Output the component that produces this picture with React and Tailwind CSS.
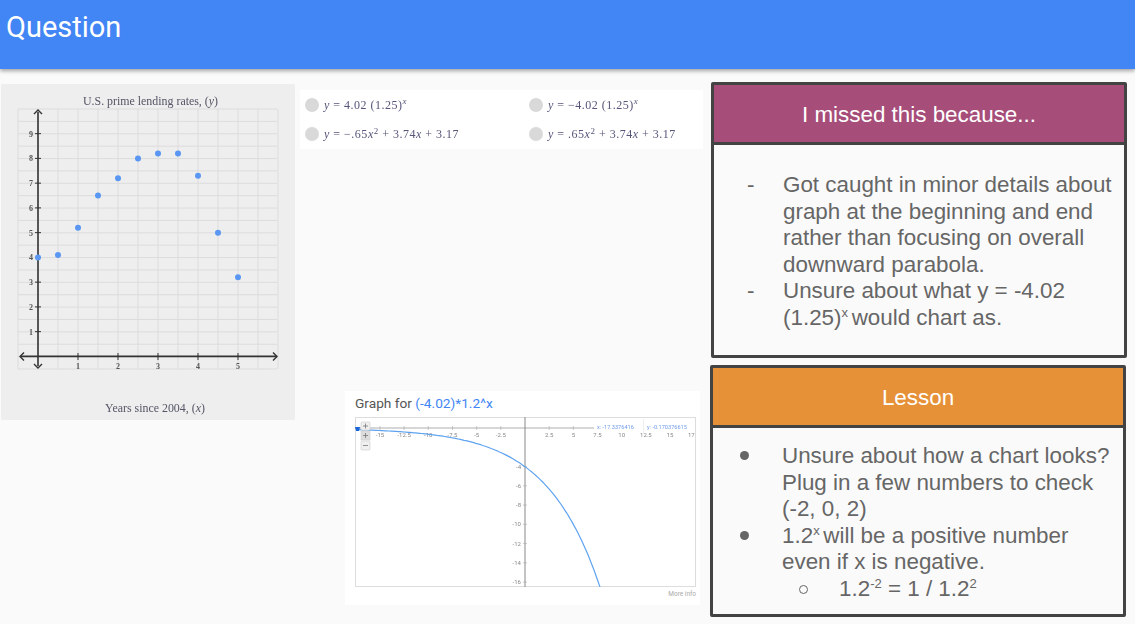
import React from 'react';

const Sans = '[font-family:"Liberation_Sans",Arial,sans-serif]';

// --- DRAWINGS ---
const LendingChart = () => {
  const points = [[0, 4], [0.5, 4.1], [1, 5.2], [1.5, 6.5], [2, 7.2], [2.5, 8], [3, 8.2], [3.5, 8.2], [4, 7.3], [4.5, 5], [5, 3.2]];
  const px = (x) => 38 + x * 40;
  const py = (y) => 356.4 - y * 24.75;
  const vLines = Array.from({ length: 14 }, (_, i) => 18 + i * 20);
  const hLines = Array.from({ length: 22 }, (_, i) => 369 - i * 12.38);
  const serif = { fontFamily: '"Liberation Serif", serif' };

  return (
    <svg viewBox="1 84 294 336" className="w-full h-full blur-[0.4px]">
      <rect x="1" y="84" width="294" height="336" fill="#eeeeee" />
      {vLines.map((x) => <line key={x} x1={x} x2={x} y1="109" y2="369" stroke="#dcdcdc" strokeWidth="1" />)}
      {hLines.map((y) => <line key={y} x1="18" x2="277" y1={y} y2={y} stroke="#dcdcdc" strokeWidth="1" />)}
      <line x1="38" x2="38" y1="112" y2="366" stroke="#333" strokeWidth="1.6" />
      <line x1="21" x2="277" y1="356.4" y2="356.4" stroke="#333" strokeWidth="1.6" />
      <path d="M34 114l4-4 4 4M34 364l4 4 4-4M24 352.4l-4 4 4 4M273 352.4l4 4-4 4" fill="none" stroke="#333" strokeWidth="1.4" />
      {[1, 2, 3, 4, 5, 6, 7, 8, 9].map((n) => (
        <g key={n}>
          <line x1="35" x2="41" y1={py(n)} y2={py(n)} stroke="#333" />
          <text x="31" y={py(n) + 3} fontSize="8" fontWeight="bold" textAnchor="middle" fill="#555" style={serif}>{n}</text>
        </g>
      ))}
      {[1, 2, 3, 4, 5].map((n) => (
        <g key={n}>
          <line x1={px(n)} x2={px(n)} y1="353" y2="360" stroke="#333" />
          <text x={px(n)} y="369" fontSize="8" fontWeight="bold" textAnchor="middle" fill="#555" style={serif}>{n}</text>
        </g>
      ))}
      {points.map(([x, y]) => <circle key={x} cx={px(x)} cy={py(y)} r="3" fill="#5a97f2" />)}
      <text x="150.5" y="105" fontSize="11.9" textAnchor="middle" fill="#555566" style={serif}>U.S. prime lending rates, (<tspan fontStyle="italic">y</tspan>)</text>
      <text x="155" y="412" fontSize="11.9" textAnchor="middle" fill="#555566" style={serif}>Years since 2004, (<tspan fontStyle="italic">x</tspan>)</text>
    </svg>
  );
};

const FunctionGraph = () => {
  const px = (x) => 525 + x * 9.67;
  const py = (y) => 428 - y * 9.63;
  const curve = [];
  for (let x = -17.3; x <= 8; x += 0.2) {
    curve.push(`${px(x).toFixed(1)},${py(-4.02 * Math.pow(1.2, x)).toFixed(1)}`);
  }
  const xLabels = [-15, -12.5, -10, -7.5, -5, -2.5, 2.5, 5, 7.5, 10, 12.5, 15, 17];
  const yLabels = [-4, -6, -8, -10, -12, -14, -16];
  const font = { fontFamily: 'Roboto, sans-serif' };

  return (
    <svg viewBox="355 417 341 170" className="w-full h-full blur-[0.3px]">
      <rect x="355.5" y="417.5" width="340" height="169" fill="#fff" stroke="#dddddd" />
      <line x1="355" x2="594" y1="428" y2="428" stroke="#999" strokeWidth="0.8" />
      <line x1="525" x2="525" y1="417" y2="587" stroke="#888" strokeWidth="1" />
      {xLabels.map((n) => (
        <g key={n}>
          <text x={px(n === 17 ? 17.2 : n)} y="437" fontSize="6" textAnchor="middle" fill="#888" style={font}>{n}</text>
          <line x1={px(n)} x2={px(n)} y1="426" y2="430" stroke="#aaa" strokeWidth="0.6" />
        </g>
      ))}
      {yLabels.map((n) => (
        <g key={n}>
          <text x="521" y={py(n) + 2} fontSize="6" textAnchor="end" fill="#888" style={font}>{n}</text>
          <line x1="523" x2="527" y1={py(n)} y2={py(n)} stroke="#aaa" strokeWidth="0.6" />
        </g>
      ))}
      <polyline points={curve.join(' ')} fill="none" stroke="#5fa3f0" strokeWidth="1.2" />
      <rect x="594" y="419" width="101" height="14" fill="#fff" />
      <line x1="643.5" x2="643.5" y1="419" y2="433" stroke="#eee" />
      <text x="597" y="429" fontSize="5.6" fill="#6f9bea" style={font}>x: -17.3376416</text>
      <text x="647" y="429" fontSize="5.6" fill="#6f9bea" style={font}>y: -0.170376615</text>
      <path d="M355 427h5l-1 4h-3z" fill="#1a66d8" />
      <rect x="361" y="422" width="9" height="8" rx="1" fill="#f0f0f0" stroke="#ccc" strokeWidth="0.6" />
      <rect x="361" y="431" width="9" height="9" fill="#ddd" stroke="#ccc" strokeWidth="0.6" />
      <rect x="361" y="441" width="9" height="9" rx="1" fill="#f0f0f0" stroke="#ccc" strokeWidth="0.6" />
      <path d="M363 426h5M365.5 423.5v5M363 435.5h5M365.5 433v5M363 445.5h5" stroke="#777" strokeWidth="0.8" />
    </svg>
  );
};

// --- LAYOUT COMPONENTS ---
const Formula = ({ children }) => (
  <div className="flex items-center h-[29px]">
    <span className="w-[14px] h-[14px] rounded-full bg-[#d9d9d9] shrink-0"></span>
    <span className='ml-[5px] text-[12px] tracking-[0.5px] text-[#55557a] blur-[0.3px] [font-family:"Liberation_Serif",serif]'>{children}</span>
  </div>
);

const V = ({ children }) => <i>{children}</i>;

const Card = ({ title, color, headerH, bodyClass, children, className }) => (
  <section className={`border-[3px] border-[#434343] rounded-[2px] bg-[#fafafa] flex flex-col ${className}`}>
    <h2 className={`${color} ${headerH} border-b-[3px] border-[#434343] pt-[3px] flex items-center justify-center text-white text-[22.4px] ${Sans}`}>{title}</h2>
    <div className={`flex-1 text-[#666666] text-[22.4px] leading-[26.5px] ${Sans} ${bodyClass}`}>{children}</div>
  </section>
);

const Item = ({ marker, indent = 'pl-[33px]', width = 'w-[36px]', children }) => (
  <div className={`flex ${indent}`}>
    <span className={`${width} shrink-0`}>{marker}</span>
    <span>{children}</span>
  </div>
);

const Sup = ({ children }) => <sup className="text-[13px] -top-[8px]">{children}</sup>;

const Dot = () => <span className="block w-[9px] h-[9px] rounded-full bg-[#666] ml-[-6px] mt-[8px]"></span>;

export default function App() {
  return (
    <div className="h-screen w-full overflow-hidden bg-[#fafafa] flex flex-col">
      <header className='h-[69px] shrink-0 bg-[#4285f4] shadow-[0_2px_4px_rgba(0,0,0,0.35)] pl-[6px] pt-[9px] text-white text-[29px] leading-[36px] [font-family:Roboto,sans-serif]'>
        Question
      </header>
      <main className="flex-1 flex items-start pl-px">
        <div className="w-[294px] h-[336px] mt-[15px] shrink-0">
          <LendingChart />
        </div>
        <div className="w-[403px] ml-[5px] shrink-0">
          <div className="mt-[21px] h-[59px] bg-white grid grid-cols-2 pl-[5px]">
            <Formula><V>y</V> = 4.02 (1.25)<sup><V>x</V></sup></Formula>
            <div className="pl-[25px]"><Formula><V>y</V> = −4.02 (1.25)<sup><V>x</V></sup></Formula></div>
            <Formula><V>y</V> = −.65<V>x</V><sup>2</sup> + 3.74<V>x</V> + 3.17</Formula>
            <div className="pl-[25px]"><Formula><V>y</V> = .65<V>x</V><sup>2</sup> + 3.74<V>x</V> + 3.17</Formula></div>
          </div>
          <div className="mt-[242px] ml-[45px] w-[355px] h-[214px] bg-white pl-[10px] pr-[4px]">
            <div className="h-[26px] pt-[2px] text-[13.7px] leading-[20px] text-[#555] [font-family:Roboto,sans-serif]">
              Graph for <span className="text-[#4285f4]">(-4.02)*1.2^x</span>
            </div>
            <div className="h-[170px]">
              <FunctionGraph />
            </div>
            <div className="text-right text-[6.5px] leading-[14px] text-[#aaa] [font-family:Roboto,sans-serif]">More info</div>
          </div>
        </div>
        <div className="w-[416px] ml-[8px] mt-[13px] shrink-0 flex flex-col gap-[7px]">
          <Card title="I missed this because..." color="bg-[#a64d79]" headerH="h-[60px]" bodyClass="pt-[27px]" className="h-[276px]">
            <Item marker="-">Got caught in minor details about graph at the beginning and end rather than focusing on overall downward parabola.</Item>
            <Item marker="-">Unsure about what y = -4.02 (1.25)<Sup>x </Sup>would chart as.</Item>
          </Card>
          <Card title="Lesson" color="bg-[#e69138]" headerH="h-[60px]" bodyClass="pt-[15px]" className="h-[252px] -ml-px mr-px">
            <Item marker={<Dot />}>Unsure about how a chart looks? Plug in a few numbers to check (-2, 0, 2)</Item>
            <Item marker={<Dot />}>1.2<Sup>x </Sup>will be a positive number even if x is negative.</Item>
            <Item indent="pl-[86px]" width="w-[40px]" marker={<span className="block w-[9px] h-[9px] rounded-full border border-[#666] mt-[9px]"></span>}>1.2<Sup>-2</Sup> = 1 / 1.2<Sup>2</Sup></Item>
          </Card>
        </div>
      </main>
    </div>
  );
}
